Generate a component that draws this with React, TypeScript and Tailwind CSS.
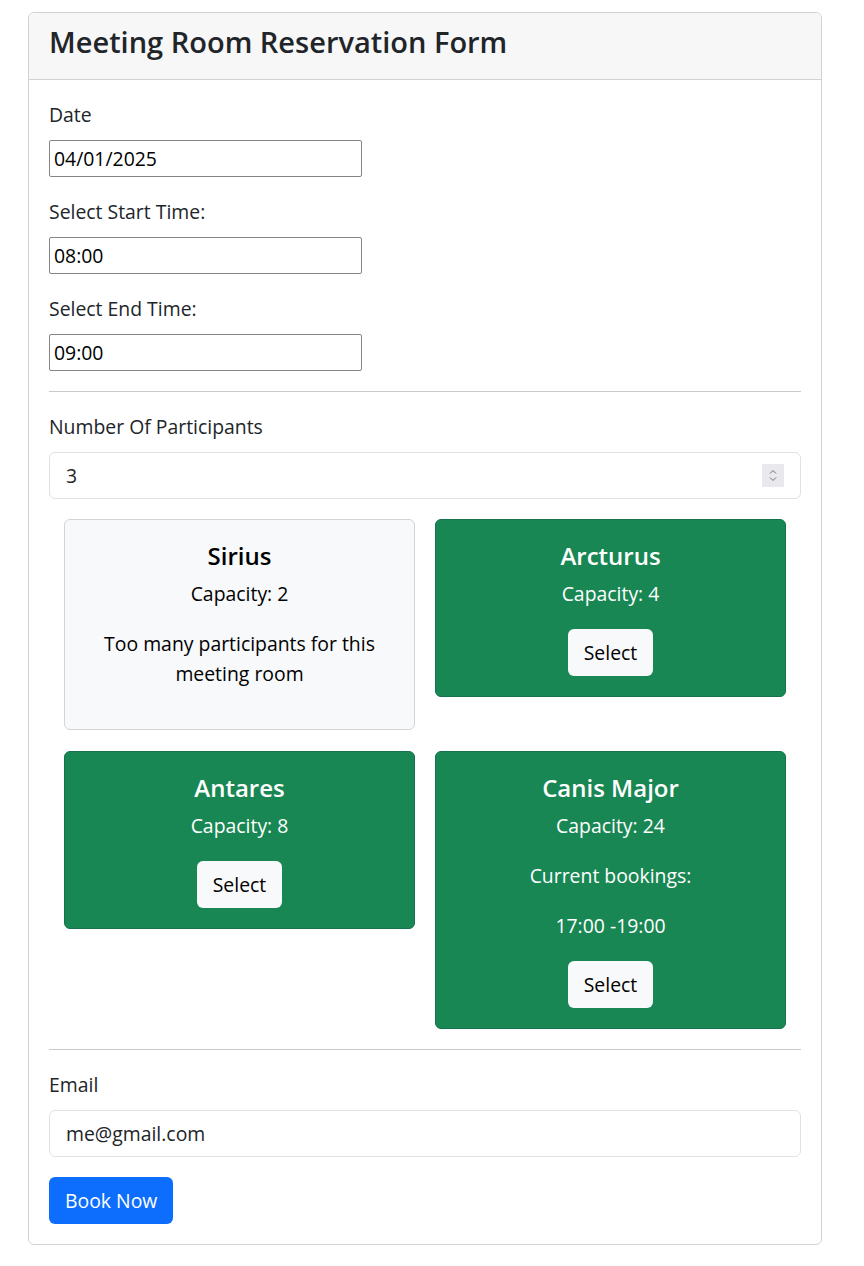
import React from 'react';

interface Room {
  name: string;
  capacity: number;
  bookings?: string[];
}

const rooms: Room[] = [
  { name: 'Sirius', capacity: 2 },
  { name: 'Arcturus', capacity: 4 },
  { name: 'Antares', capacity: 8 },
  { name: 'Canis Major', capacity: 24, bookings: ['17:00 -19:00'] },
];

const participants = 3;

const Label = ({ children }: { children: React.ReactNode }) => (
  <label className="block leading-[30px] mb-[10px] text-[#212529]">{children}</label>
);

const PlainInput = ({ value }: { value: string }) => (
  <input
    readOnly
    defaultValue={value}
    className="block w-[313px] h-[37px] px-[4px] border border-[#858585] rounded-[2px] text-black outline-none"
  />
);

const RoomCard = ({ room }: { room: Room }) => {
  const full = room.capacity < participants;
  return (
    <div
      className={
        full
          ? 'rounded-[6px] border border-[#d3d4d5] bg-[#f8f9fa] text-black p-5 text-center'
          : 'rounded-[6px] border border-[#16704a] bg-[#198754] text-white p-5 text-center'
      }
    >
      <h3 className="text-[24px] font-semibold leading-[31px] mb-2">{room.name}</h3>
      <p className="leading-[30px] mb-5">Capacity: {room.capacity}</p>
      {room.bookings && (
        <>
          <p className="leading-[30px] mb-5">Current bookings:</p>
          {room.bookings.map((b) => (
            <p key={b} className="leading-[30px] mb-5">{b}</p>
          ))}
        </>
      )}
      {full ? (
        <p className="leading-[30px] mb-5">Too many participants for this meeting room</p>
      ) : (
        <button className="h-[47px] px-4 rounded-[6px] bg-[#f8f9fa] text-black leading-[30px]">Select</button>
      )}
    </div>
  );
};

export default function App() {
  return (
    <div className="bg-white min-h-screen pt-[12px] pl-[28px] pr-[42px] pb-[21px] text-[19.4px] font-['Open_Sans',sans-serif]">
      <div className="border border-[#d2d2d2] rounded-[6px] overflow-hidden">
        <div className="bg-[#f7f7f7] border-b border-[#d2d2d2] px-5 pt-[11px] pb-[20px]">
          <h2 className="text-[29px] font-semibold leading-[35px] text-[#212529]">Meeting Room Reservation Form</h2>
        </div>

        <div className="p-5">
          <Label>Date</Label>
          <PlainInput value="04/01/2025" />

          <div className="mt-5">
            <Label>Select Start Time:</Label>
            <PlainInput value="08:00" />
          </div>

          <div className="mt-5">
            <Label>Select End Time:</Label>
            <PlainInput value="09:00" />
          </div>

          <hr className="my-5 border-t border-[#c8c9ca]" />

          <Label>Number Of Participants</Label>
          <div className="h-[47px] flex items-center justify-between border border-[#dee2e6] rounded-[6px] px-4 text-[#212529]">
            <span>{participants}</span>
            <div className="w-[22px] h-[23px] bg-[#e9e9ed] flex flex-col items-center justify-center gap-[3px]">
              <svg width="8" height="5" viewBox="0 0 8 5" fill="none">
                <path d="M1 4.5 4 1.5 7 4.5" stroke="#707070" strokeWidth="1" />
              </svg>
              <svg width="8" height="5" viewBox="0 0 8 5" fill="none">
                <path d="M1 0.5 4 3.5 7 0.5" stroke="#707070" strokeWidth="1" />
              </svg>
            </div>
          </div>

          <div className="grid grid-cols-2 items-start gap-x-5 gap-y-[21px] px-[15px] mt-5">
            {rooms.map((r) => (
              <RoomCard key={r.name} room={r} />
            ))}
          </div>

          <hr className="my-5 border-t border-[#c8c9ca]" />

          <Label>Email</Label>
          <input
            readOnly
            defaultValue="me@gmail.com"
            className="block w-full h-[47px] px-4 border border-[#dee2e6] rounded-[6px] text-[#212529] outline-none"
          />

          <button className="mt-5 h-[47px] px-4 rounded-[6px] bg-[#0d6efd] text-white leading-[30px]">Book Now</button>
        </div>
      </div>
    </div>
  );
}
